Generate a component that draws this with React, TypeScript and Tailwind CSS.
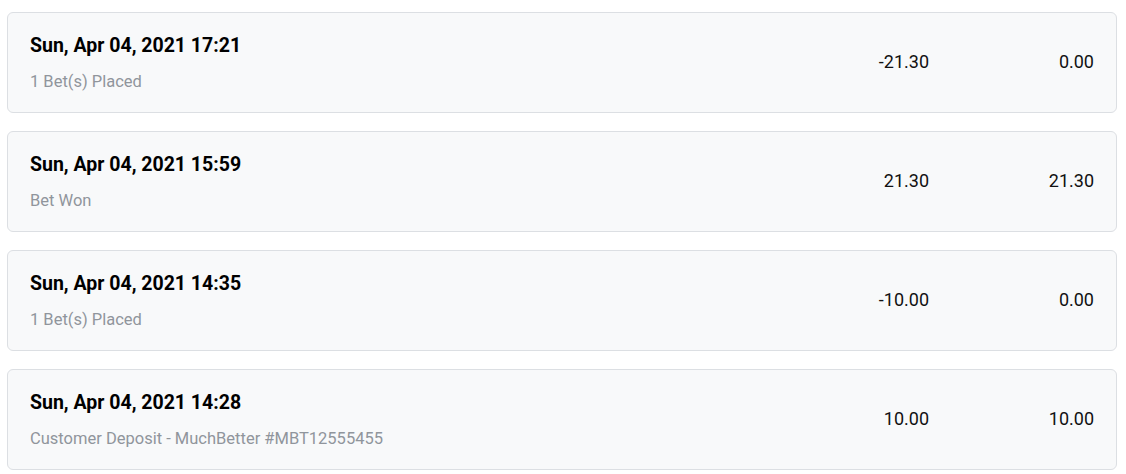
import React from 'react';

interface Transaction {
  date: string;
  description: string;
  amount: string;
  balance: string;
}

const transactions: Transaction[] = [
  { date: 'Sun, Apr 04, 2021 17:21', description: '1 Bet(s) Placed', amount: '-21.30', balance: '0.00' },
  { date: 'Sun, Apr 04, 2021 15:59', description: 'Bet Won', amount: '21.30', balance: '21.30' },
  { date: 'Sun, Apr 04, 2021 14:35', description: '1 Bet(s) Placed', amount: '-10.00', balance: '0.00' },
  {
    date: 'Sun, Apr 04, 2021 14:28',
    description: 'Customer Deposit - MuchBetter #MBT12555455',
    amount: '10.00',
    balance: '10.00',
  },
];

const TransactionCard = ({ tx }: { tx: Transaction }) => (
  <div className="flex h-[101px] items-center rounded-[6px] border border-[#dcdfe3] bg-[#f8f9fa] pl-[22px] pr-[22px]">
    <div className="flex-1">
      <div className="text-[19.5px] font-bold leading-[24px] text-black">{tx.date}</div>
      <div className="mt-[14px] text-[16.5px] leading-[20px] text-[#90959c]">{tx.description}</div>
    </div>
    <div className="w-[165px] pb-[2px] text-right text-[18px] text-[#111]">{tx.amount}</div>
    <div className="w-[165px] pb-[2px] text-right text-[18px] text-[#111]">{tx.balance}</div>
  </div>
);

export default function App() {
  return (
    <div className="min-h-[474px] bg-white pl-[7px] pr-[9px] pt-[12px]" style={{ fontFamily: 'Roboto, "Liberation Sans", sans-serif' }}>
      <div className="flex flex-col gap-[18px]">
        {transactions.map((tx) => (
          <TransactionCard key={tx.date} tx={tx} />
        ))}
      </div>
    </div>
  );
}
